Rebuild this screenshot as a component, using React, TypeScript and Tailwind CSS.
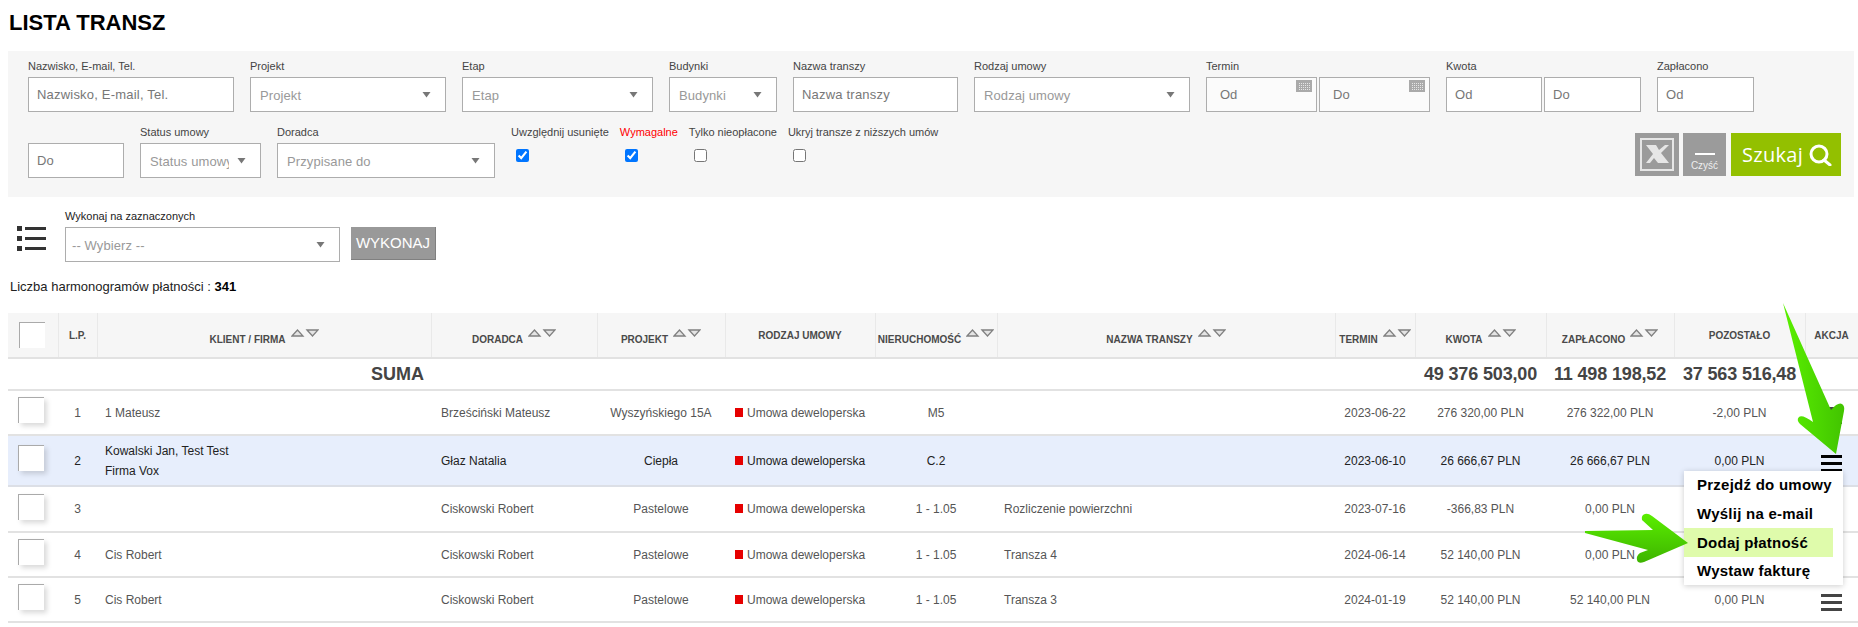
const rows = [
  { id: 1, klient: ['1 Mateusz'], doradca: 'Brześciński Mateusz', projekt: 'Wyszyńskiego 15A', nieruchomosc: 'M5', transza: '', termin: '2023-06-22', kwota: '276 320,00 PLN', zaplacono: '276 322,00 PLN', pozostalo: '-2,00 PLN', h: 'h-[45px]' },
  { id: 2, klient: ['Kowalski Jan, Test Test', 'Firma Vox'], doradca: 'Głaz Natalia', projekt: 'Ciepła', nieruchomosc: 'C.2', transza: '', termin: '2023-06-10', kwota: '26 666,67 PLN', zaplacono: '26 666,67 PLN', pozostalo: '0,00 PLN', h: 'h-[51px]', active: true },
  { id: 3, klient: [''], doradca: 'Ciskowski Robert', projekt: 'Pastelowe', nieruchomosc: '1 - 1.05', transza: 'Rozliczenie powierzchni', termin: '2023-07-16', kwota: '-366,83 PLN', zaplacono: '0,00 PLN', pozostalo: '', h: 'h-[46px]' },
  { id: 4, klient: ['Cis Robert'], doradca: 'Ciskowski Robert', projekt: 'Pastelowe', nieruchomosc: '1 - 1.05', transza: 'Transza 4', termin: '2024-06-14', kwota: '52 140,00 PLN', zaplacono: '0,00 PLN', pozostalo: '', h: 'h-[45px]' },
  { id: 5, klient: ['Cis Robert'], doradca: 'Ciskowski Robert', projekt: 'Pastelowe', nieruchomosc: '1 - 1.05', transza: 'Transza 3', termin: '2024-01-19', kwota: '52 140,00 PLN', zaplacono: '52 140,00 PLN', pozostalo: '0,00 PLN', h: 'h-[45px]' },
];

function Caret() {
  return (
    <svg width="9" height="7" viewBox="0 0 9 7" className="shrink-0">
      <path d="M0.5 1h8L4.5 6.5z" fill="#777" />
    </svg>
  );
}

function SortIcons() {
  return (
    <svg width="28" height="8" viewBox="0 0 28 8" className="inline-block align-[6px] ml-[5px]">
      <path d="M1 7L6.5 1L12 7z" fill="#e4e4e4" stroke="#808080" strokeWidth="1.3" />
      <path d="M16 1L21.5 7L27 1z" fill="#e4e4e4" stroke="#808080" strokeWidth="1.3" />
    </svg>
  );
}

function Hamburger({ color }: { color: string }) {
  return (
    <svg width="21" height="17" viewBox="0 0 21 17" className="block ml-[16px] mt-[6px]">
      <rect y="0" width="21" height="3" fill={color} />
      <rect y="7" width="21" height="3" fill={color} />
      <rect y="14" width="21" height="3" fill={color} />
    </svg>
  );
}

function Label({ children, red }: { children: string; red?: boolean }) {
  return (
    <label className={`block h-[14px] mb-[4px] text-[11px] leading-[14px] whitespace-nowrap ${red ? 'text-[#f00]' : 'text-[#444]'}`}>
      {children}
    </label>
  );
}

function Select({ text, width }: { text: string; width: string }) {
  return (
    <div className={`${width} h-[35px] bg-white border border-[#adadad] flex items-center pl-[9px] pr-[14px] gap-2`}>
      <span className="flex-1 overflow-hidden whitespace-nowrap text-[13px] tracking-[0.1px] text-[#999] pt-[2px]">{text}</span>
      <Caret />
    </div>
  );
}

function TextInput({ placeholder, width }: { placeholder: string; width: string }) {
  return (
    <input
      placeholder={placeholder}
      className={`${width} h-[35px] bg-white border border-[#adadad] px-[8px] text-[13px] tracking-[0.2px] placeholder:text-[#777] outline-none`}
    />
  );
}

function DateInput({ placeholder }: { placeholder: string }) {
  return (
    <div className="relative w-[111px] h-[35px] bg-[#fbfbfb] border border-[#adadad] pl-[13px] flex items-center text-[13px] text-[#777]">
      {placeholder}
      <svg width="16" height="12" viewBox="0 0 16 12" className="absolute top-[2px] right-[4px]">
        <rect width="16" height="12" fill="#aaa" />
        <path d="M3 3.5h12M3 5.5h12M3 7.5h12M3 9.5h12" stroke="#e6e6e6" strokeWidth="1" strokeDasharray="1 1" />
      </svg>
    </div>
  );
}

function Check({ checked, className }: { checked: boolean; className: string }) {
  return <input type="checkbox" defaultChecked={checked} className={`block w-[13px] h-[13px] ${className}`} />;
}

function Th({ children, sort, className }: { children: string; sort?: boolean; className?: string }) {
  return (
    <th className={`bg-[#f6f6f6] border-r border-[#e9e9e9] border-b-2 border-b-[#e2e2e2] text-[10px] font-bold text-[#4a4a4a] text-center whitespace-nowrap align-middle ${sort ? 'pt-[6px]' : ''} ${className ?? ''}`}>
      {children}
      {sort && <SortIcons />}
    </th>
  );
}

export default function App() {
  return (
    <div className="relative h-[627px] w-[1858px] overflow-hidden bg-white font-['Liberation_Sans',Arial,sans-serif]">
      <h1 className="pl-[9px] pt-[10px] h-[51px] text-[22px] leading-[25px] font-bold text-black">LISTA TRANSZ</h1>

      {/* Filtry */}
      <div className="ml-[8px] w-[1846px] h-[146px] bg-[#f6f6f6] pl-[20px] pr-[13px] pt-[8px]">
        <div className="flex gap-x-[16px]">
          <div>
            <Label>Nazwisko, E-mail, Tel.</Label>
            <TextInput placeholder="Nazwisko, E-mail, Tel." width="w-[206px]" />
          </div>
          <div>
            <Label>Projekt</Label>
            <Select text="Projekt" width="w-[196px]" />
          </div>
          <div>
            <Label>Etap</Label>
            <Select text="Etap" width="w-[191px]" />
          </div>
          <div>
            <Label>Budynki</Label>
            <Select text="Budynki" width="w-[108px]" />
          </div>
          <div>
            <Label>Nazwa transzy</Label>
            <TextInput placeholder="Nazwa transzy" width="w-[165px]" />
          </div>
          <div>
            <Label>Rodzaj umowy</Label>
            <Select text="Rodzaj umowy" width="w-[216px]" />
          </div>
          <div>
            <Label>Termin</Label>
            <div className="flex gap-[2px]">
              <DateInput placeholder="Od" />
              <DateInput placeholder="Do" />
            </div>
          </div>
          <div>
            <Label>Kwota</Label>
            <div className="flex gap-[2px]">
              <TextInput placeholder="Od" width="w-[96px]" />
              <TextInput placeholder="Do" width="w-[97px]" />
            </div>
          </div>
          <div>
            <Label>Zapłacono</Label>
            <TextInput placeholder="Od" width="w-[97px]" />
          </div>
        </div>

        <div className="flex gap-x-[16px] mt-[13px]">
          <div className="pt-[18px]">
            <TextInput placeholder="Do" width="w-[96px]" />
          </div>
          <div>
            <Label>Status umowy</Label>
            <Select text="Status umowy" width="w-[121px]" />
          </div>
          <div>
            <Label>Doradca</Label>
            <Select text="Przypisane do" width="w-[218px]" />
          </div>
          <div className="flex gap-x-[11px]">
            <div>
              <Label>Uwzględnij usunięte</Label>
              <Check checked className="ml-[5px] mt-[10px]" />
            </div>
            <div>
              <Label red>Wymagalne</Label>
              <Check checked className="ml-[5px] mt-[10px]" />
            </div>
            <div>
              <Label>Tylko nieopłacone</Label>
              <Check checked={false} className="ml-[5px] mt-[10px]" />
            </div>
            <div>
              <Label>Ukryj transze z niższych umów</Label>
              <Check checked={false} className="ml-[5px] mt-[10px]" />
            </div>
          </div>

          <div className="ml-auto flex pt-[8px]">
            <button className="w-[44px] h-[43px] bg-[#9b9b9b] flex items-center justify-center">
              <svg width="34" height="33" viewBox="0 0 34 33">
                <rect x="1" y="1" width="32" height="31" fill="none" stroke="#e6e6e6" strokeWidth="2" />
                <path d="M6 7h10l3 5 6-5h4l-8 8 8 10H18l-4-5-4 5H6l7-9z" fill="#e6e6e6" />
              </svg>
            </button>
            <button className="ml-[4px] w-[43px] h-[43px] bg-[#9b9b9b] flex flex-col items-center text-[#eee]">
              <span className="block w-[20px] h-[2px] mt-[20px] bg-white" />
              <span className="block mt-[5px] text-[10px] leading-[12px]">Czyść</span>
            </button>
            <button className="ml-[5px] w-[110px] h-[43px] bg-[#93c000] flex items-center pl-[11px] text-white text-[20px] tracking-[0.3px] font-['Open_Sans',sans-serif]">
              Szukaj
              <svg width="23" height="22" viewBox="0 0 23 22" className="ml-[6px]">
                <circle cx="10" cy="10" r="8" fill="none" stroke="white" strokeWidth="3" />
                <path d="M15 16l6 5" stroke="white" strokeWidth="3" strokeLinecap="round" />
              </svg>
            </button>
          </div>
        </div>
      </div>

      {/* Akcje zbiorcze */}
      <div className="flex items-start pl-[17px] pt-[12px]">
        <svg width="29" height="25" viewBox="0 0 29 25" className="mt-[17px] shrink-0">
          <g fill="#333">
            <rect x="0" y="0" width="5" height="5" />
            <rect x="8" y="1" width="21" height="3" />
            <rect x="0" y="10" width="5" height="5" />
            <rect x="8" y="11" width="21" height="3" />
            <rect x="0" y="20" width="5" height="5" />
            <rect x="8" y="21" width="21" height="3" />
          </g>
        </svg>
        <div className="ml-[19px]">
          <label className="block h-[14px] mb-[4px] text-[11px] leading-[14px] text-[#222]">Wykonaj na zaznaczonych</label>
          <div className="w-[275px] h-[35px] bg-white border border-[#adadad] flex items-center pl-[6px] pr-[14px]">
            <span className="flex-1 text-[13px] tracking-[0.1px] text-[#999] pt-[2px]">-- Wybierz --</span>
            <Caret />
          </div>
        </div>
        <button className="ml-[11px] mt-[18px] w-[85px] h-[33px] bg-[#999] border-b border-r border-[#808080] text-white text-[15px]">
          WYKONAJ
        </button>
      </div>

      <p className="pl-[10px] mt-[18px] h-[14px] text-[13px] leading-[14px] text-[#222]">
        Liczba harmonogramów płatności : <b className="text-black">341</b>
      </p>

      {/* Tabela */}
      <table className="table-fixed w-[1850px] ml-[8px] mt-[19px] text-[12px] text-[#555]">
        <colgroup>
          <col className="w-[50px]" />
          <col className="w-[39px]" />
          <col className="w-[334px]" />
          <col className="w-[166px]" />
          <col className="w-[128px]" />
          <col className="w-[150px]" />
          <col className="w-[122px]" />
          <col className="w-[338px]" />
          <col className="w-[80px]" />
          <col className="w-[131px]" />
          <col className="w-[128px]" />
          <col className="w-[131px]" />
          <col className="w-[53px]" />
        </colgroup>
        <thead>
          <tr className="h-[45px]">
            <th className="bg-[#f6f6f6] border-r border-[#e9e9e9] border-b-2 border-b-[#e2e2e2] align-middle">
              <div className="w-[26px] h-[26px] ml-[11px] bg-white border-t border-l border-[#aaa]" />
            </th>
            <Th>L.P.</Th>
            <Th sort>KLIENT / FIRMA</Th>
            <Th sort>DORADCA</Th>
            <Th sort>PROJEKT</Th>
            <Th>RODZAJ UMOWY</Th>
            <Th sort>NIERUCHOMOŚĆ</Th>
            <Th sort>NAZWA TRANSZY</Th>
            <Th sort>TERMIN</Th>
            <Th sort>KWOTA</Th>
            <Th sort>ZAPŁACONO</Th>
            <Th>POZOSTAŁO</Th>
            <Th>AKCJA</Th>
          </tr>
        </thead>
        <tbody>
          <tr className="h-[32px] border-b-2 border-[#e2e2e2] text-[18px] font-bold text-[#444]">
            <td colSpan={3} className="text-right pr-[7px]">SUMA</td>
            <td colSpan={5} />
            <td />
            <td className="text-center tracking-[-0.15px]">49 376 503,00</td>
            <td className="text-center tracking-[-0.15px]">11 498 198,52</td>
            <td className="text-center tracking-[-0.15px]">37 563 516,48</td>
            <td />
          </tr>
          {rows.map((row) => (
            <tr key={row.id} className={`${row.h} border-b-2 ${row.active ? 'bg-[#e7eefc] text-[#222] border-[#dcdfe6]' : 'border-[#e2e2e2]'}`}>
              <td>
                <div className="w-[26px] h-[26px] ml-[10px] mb-[5px] bg-white border-t border-l border-[#aaa] shadow-[3px_3px_5px_rgba(0,0,0,0.15)]" />
              </td>
              <td className="text-center">{row.id}</td>
              <td className="pl-[8px] leading-[20px]">
                {row.klient.map((line) => (
                  <div key={line}>{line}</div>
                ))}
              </td>
              <td className="pl-[10px]">{row.doradca}</td>
              <td className="text-center">{row.projekt}</td>
              <td className="pl-[10px]">
                <span className="inline-block w-[8px] h-[9px] mr-[4px] bg-[#e60000]" />
                Umowa deweloperska
              </td>
              <td className="text-center">{row.nieruchomosc}</td>
              <td className="pl-[7px]">{row.transza}</td>
              <td className="text-center">{row.termin}</td>
              <td className="text-center">{row.kwota}</td>
              <td className="text-center">{row.zaplacono}</td>
              <td className="text-center">{row.pozostalo}</td>
              <td>
                <Hamburger color={row.active ? '#000' : '#444'} />
              </td>
            </tr>
          ))}
        </tbody>
      </table>

      {/* Menu akcji */}
      <div className="absolute left-[1684px] top-[471px] w-[159px] h-[114px] bg-white shadow-[0_1px_6px_rgba(0,0,0,0.2)] text-[15px] font-bold text-black tracking-[0.25px]">
        <div className="h-[29px] leading-[28px] pl-[13px]">Przejdź do umowy</div>
        <div className="h-[28px] leading-[28px] pl-[13px]">Wyślij na e-mail</div>
        <div className="h-[29px] w-[149px] leading-[29px] pl-[13px] bg-[#dffbab]">Dodaj płatność</div>
        <div className="h-[28px] leading-[27px] pl-[13px]">Wystaw fakturę</div>
      </div>

      {/* Strzałki */}
      <svg className="absolute left-0 top-0 pointer-events-none" width="1858" height="627" viewBox="0 0 1858 627">
        <defs>
          <linearGradient id="arrowDown" x1="0" y1="0" x2="1" y2="0">
            <stop offset="0" stopColor="#5af000" />
            <stop offset="1" stopColor="#42c400" />
          </linearGradient>
          <linearGradient id="arrowRight" x1="0" y1="0" x2="0" y2="1">
            <stop offset="0" stopColor="#5aee00" />
            <stop offset="1" stopColor="#3eb400" />
          </linearGradient>
        </defs>
        <path
          d="M1783 303L1831 410Q1838 402 1842 404Q1845 406 1844 411L1836 454L1800 424Q1796 420 1799 417Q1802 414 1813 422Z"
          fill="url(#arrowDown)"
        />
        <path
          d="M1585 531L1653 530L1642 520Q1641 515 1645 514Q1648 513 1652 516L1688 543L1644 562Q1638 564 1637 560Q1636 556 1640 553L1648 550L1585 533Z"
          fill="url(#arrowRight)"
        />
      </svg>
    </div>
  );
}
